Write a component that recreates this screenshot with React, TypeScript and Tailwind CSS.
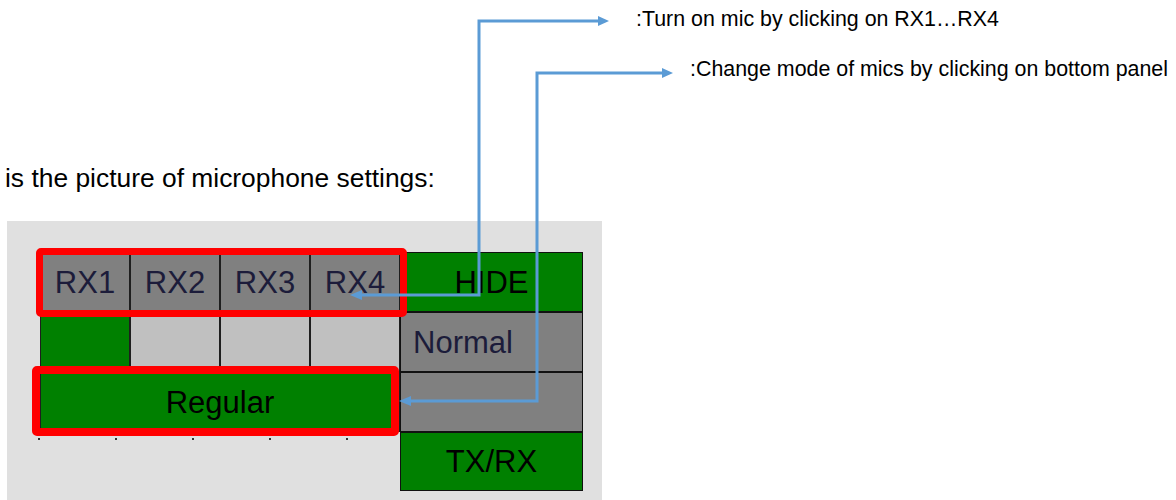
import React from "react";

const cellFont = "font-['Liberation_Sans',Arial,sans-serif] text-[31px] leading-none";

function Cell({
  className,
  children,
}: {
  className: string;
  children?: React.ReactNode;
}) {
  return (
    <div className={`flex items-center border border-[#1e1e1e] ${cellFont} ${className}`}>
      {children}
    </div>
  );
}

export default function App() {
  return (
    <div className="relative w-[1176px] h-[500px] overflow-hidden bg-white font-['Liberation_Sans',Arial,sans-serif] text-black">
      <div className="flex flex-col">
        <div className="pt-[7px] pl-[636px] text-[21.4px] leading-[24px] whitespace-nowrap">
          :Turn on mic by clicking on RX1…RX4
        </div>
        <div className="mt-[26px] pl-[690px] text-[21.4px] leading-[24px] whitespace-nowrap">
          :Change mode of mics by clicking on bottom panel
        </div>
        <div className="mt-[82px] pl-[5px] text-[26.4px] leading-[30px] whitespace-nowrap">
          is the picture of microphone settings:
        </div>
        <div className="relative mt-[28px] ml-[7px] w-[595px] h-[279px] bg-[#e0e0e0] pl-[33px] pt-[31px]">
          <div className="grid w-fit grid-cols-[90px_90px_90px_90px_183px] grid-rows-[60px_60px_60px_59px]">
            <Cell className="justify-center bg-[#808080] text-[#1c1c3a]">RX1</Cell>
            <Cell className="justify-center bg-[#808080] text-[#1c1c3a]">RX2</Cell>
            <Cell className="justify-center bg-[#808080] text-[#1c1c3a]">RX3</Cell>
            <Cell className="justify-center bg-[#808080] text-[#1c1c3a]">RX4</Cell>
            <Cell className="justify-center bg-[#008000] text-black border-[#111]">HIDE</Cell>

            <Cell className="bg-[#008000]" />
            <Cell className="bg-[#c0c0c0]" />
            <Cell className="bg-[#c0c0c0]" />
            <Cell className="bg-[#c0c0c0]" />
            <Cell className="bg-[#808080] pl-[12px] text-[#1c1c3a] border-[#111]">Normal</Cell>

            <Cell className="col-span-4 justify-center bg-[#008000] text-black">Regular</Cell>
            <Cell className="bg-[#808080] border-[#111]" />

            <div className="col-span-4 flex items-start gap-[75px] pt-[6px] -ml-[2px]">
              <span className="block w-[2px] h-[2px] bg-[#333]" />
              <span className="block w-[2px] h-[2px] bg-[#333]" />
              <span className="block w-[2px] h-[2px] bg-[#333]" />
              <span className="block w-[2px] h-[2px] bg-[#333]" />
              <span className="block w-[2px] h-[2px] bg-[#333]" />
            </div>
            <Cell className="justify-center bg-[#008000] text-black border-[#111]">TX/RX</Cell>
          </div>

          <div className="absolute left-[29px] top-[27px] w-[371px] h-[69px] rounded-[5px] border-[7px] border-[#ff0000]" />
          <div className="absolute left-[25px] top-[145px] w-[367px] h-[70px] rounded-[5px] border-[8px] border-[#ff0000]" />
        </div>
      </div>

      <svg
        className="absolute left-0 top-0 pointer-events-none"
        width="1176"
        height="500"
        viewBox="0 0 1176 500"
      >
        <g fill="none" stroke="#5b9bd5" strokeWidth="3">
          <polyline points="361,295 479,295 479,21 598,21" />
          <polyline points="410,401 537,401 537,73 663,73" />
        </g>
        <g fill="#5b9bd5">
          <polygon points="598,16 609,21 598,26" />
          <polygon points="362,290 350,295 362,300" />
          <polygon points="662,68 673,73 662,78" />
          <polygon points="411,396 399,401 411,406" />
        </g>
      </svg>
    </div>
  );
}
